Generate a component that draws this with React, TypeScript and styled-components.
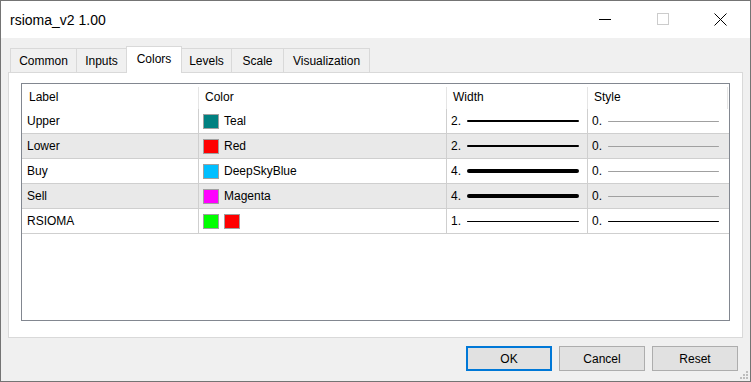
import React from "react"
import styled, { createGlobalStyle } from "styled-components"

const GlobalStyle = createGlobalStyle`
  html, body {
    margin: 0;
    padding: 0;
    background: #ffffff;
  }
  * {
    box-sizing: border-box;
  }
`

interface PlotRow {
  label: string,
  swatches: string[],
  colorName?: string,
  width: number,
  styleColor: string,
}

const rows: PlotRow[] = [
  { label: "Upper", swatches: ["#008080"], colorName: "Teal", width: 2, styleColor: "#a0a0a0" },
  { label: "Lower", swatches: ["#ff0000"], colorName: "Red", width: 2, styleColor: "#a0a0a0" },
  { label: "Buy", swatches: ["#00bfff"], colorName: "DeepSkyBlue", width: 4, styleColor: "#a0a0a0" },
  { label: "Sell", swatches: ["#ff00ff"], colorName: "Magenta", width: 4, styleColor: "#a0a0a0" },
  { label: "RSIOMA", swatches: ["#00ff00", "#ff0000"], width: 1, styleColor: "#000000" },
]

const tabs = [
  { name: "Common", width: 67 },
  { name: "Inputs", width: 50 },
  { name: "Colors", width: 55, active: true },
  { name: "Levels", width: 50 },
  { name: "Scale", width: 52 },
  { name: "Visualization", width: 86 },
]

export default function App() {
  return (
    <>
      <GlobalStyle/>
      <Window>
        <TitleBar>
          <Title>rsioma_v2 1.00</Title>
          <CaptionButtons>
            <CaptionButton>
              <svg width="12" height="12" viewBox="0 0 12 12">
                <line x1="0" y1="6.5" x2="12" y2="6.5" stroke="#000" strokeWidth="1"/>
              </svg>
            </CaptionButton>
            <CaptionButton>
              <svg width="12" height="12" viewBox="0 0 12 12">
                <rect x="0.5" y="0.5" width="11" height="11" fill="none" stroke="#cccccc" strokeWidth="1"/>
              </svg>
            </CaptionButton>
            <CaptionButton>
              <svg width="13" height="13" viewBox="0 0 13 13">
                <path d="M0.5 0.5 L12.5 12.5 M12.5 0.5 L0.5 12.5" stroke="#000" strokeWidth="1"/>
              </svg>
            </CaptionButton>
          </CaptionButtons>
        </TitleBar>

        <DialogBody>
          <TabStrip>
            {tabs.map(t => (
              <Tab key={t.name} $width={t.width} $active={!!t.active}>{t.name}</Tab>
            ))}
          </TabStrip>

          <TabPanel>
            <ListView>
              <HeaderRow>
                <HeaderCell>Label</HeaderCell>
                <HeaderCell $divider>Color</HeaderCell>
                <HeaderCell $divider>Width</HeaderCell>
                <HeaderCell $divider $last>Style</HeaderCell>
              </HeaderRow>
              {rows.map((r, i) => (
                <Row key={r.label} $shaded={i % 2 === 1}>
                  <Cell>{r.label}</Cell>
                  <Cell $divider>
                    {r.swatches.map((c, j) => <Swatch key={j} $color={c}/>)}
                    {r.colorName && <span>{r.colorName}</span>}
                  </Cell>
                  <Cell $divider>
                    <Value>{r.width}.</Value>
                    <Stroke $thickness={r.width} $color="#000000" $length={112}/>
                  </Cell>
                  <Cell $divider>
                    <Value>0.</Value>
                    <Stroke $thickness={1} $color={r.styleColor} $length={111}/>
                  </Cell>
                </Row>
              ))}
            </ListView>
          </TabPanel>

          <ButtonBar>
            <Button $default>OK</Button>
            <Button>Cancel</Button>
            <Button>Reset</Button>
          </ButtonBar>
        </DialogBody>

        <SizeGrip width="11" height="11" viewBox="0 0 11 11">
          <rect x="8" y="2" width="2" height="2" fill="#bdbdbd"/>
          <rect x="5" y="5" width="2" height="2" fill="#bdbdbd"/>
          <rect x="8" y="5" width="2" height="2" fill="#bdbdbd"/>
          <rect x="2" y="8" width="2" height="2" fill="#bdbdbd"/>
          <rect x="5" y="8" width="2" height="2" fill="#bdbdbd"/>
          <rect x="8" y="8" width="2" height="2" fill="#bdbdbd"/>
        </SizeGrip>
      </Window>
    </>
  )
}

const Window = styled.div`
  border: 1px solid #747474;
  display: flex;
  flex-direction: column;
  font-family: "Liberation Sans", Arial, sans-serif;
  font-size: 12px;
  color: #000;
  height: 382px;
  position: relative;
  width: 751px;
`

const TitleBar = styled.div`
  align-items: center;
  background: #ffffff;
  display: flex;
  flex: 0 0 37px;
  justify-content: space-between;
`

const Title = styled.div`
  font-size: 14px;
  padding-left: 9px;
`

const CaptionButtons = styled.div`
  display: flex;
  height: 100%;
`

const CaptionButton = styled.div`
  align-items: center;
  display: flex;
  justify-content: center;
  width: 58px;
  padding: 0 1px 1px 0;
`

const DialogBody = styled.div`
  background: #f0f0f0;
  display: flex;
  flex: 1;
  flex-direction: column;
  padding: 8px 7px 0;
`

const TabStrip = styled.div`
  align-items: flex-end;
  display: flex;
  height: 26px;
  padding-left: 2px;
  position: relative;
  z-index: 1;
`

const Tab = styled.div<{ $width: number, $active: boolean }>`
  align-items: center;
  background: ${({ $active }) => $active ? "#ffffff" : "#f0f0f0"};
  border: 1px solid #d9d9d9;
  border-bottom: none;
  display: flex;
  height: ${({ $active }) => $active ? "27px" : "24px"};
  justify-content: center;
  margin-bottom: ${({ $active }) => $active ? "-1px" : "0"};
  margin-left: -1px;
  padding-bottom: ${({ $active }) => $active ? "3px" : "0"};
  width: ${({ $width }) => $width + 1}px;
  z-index: ${({ $active }) => $active ? 2 : 1};

  &:first-child {
    margin-left: 0;
    width: ${({ $width }) => $width}px;
  }
`

const TabPanel = styled.div`
  background: #ffffff;
  border: 1px solid #d9d9d9;
  height: 266px;
  padding: 10px 12px 16px 12px;
`

const ListView = styled.div`
  background: #ffffff;
  border: 1px solid #828790;
  height: 238px;
`

const columns = "176px 248px 141px 141px"

const HeaderRow = styled.div`
  display: grid;
  grid-template-columns: ${columns};
  height: 25px;
`

const HeaderCell = styled.div<{ $divider?: boolean, $last?: boolean }>`
  align-items: center;
  border-left: ${({ $divider }) => $divider ? "1px solid #e5e5e5" : "none"};
  border-right: ${({ $last }) => $last ? "1px solid #e5e5e5" : "none"};
  display: flex;
  margin-top: 3px;
  padding-left: ${({ $divider }) => $divider ? "6px" : "7px"};
  padding-bottom: 2px;
`

const Row = styled.div<{ $shaded: boolean }>`
  background: ${({ $shaded }) => $shaded ? "#e9e9e9" : "#ffffff"};
  border-bottom: 1px solid #cfcfcf;
  display: grid;
  grid-template-columns: ${columns};
  height: 25px;
`

const Cell = styled.div<{ $divider?: boolean }>`
  align-items: center;
  border-left: ${({ $divider }) => $divider ? "1px solid #cfcfcf" : "none"};
  display: flex;
  gap: 5px;
  padding-left: ${({ $divider }) => $divider ? "4px" : "5px"};
  white-space: nowrap;
`

const Swatch = styled.div<{ $color: string }>`
  background: ${({ $color }) => $color};
  border: 1px solid #a0a0a0;
  height: 15px;
  width: 16px;
`

const Value = styled.span`
  margin-right: 1px;
  width: 10px;
`

const Stroke = styled.div<{ $thickness: number, $color: string, $length: number }>`
  background: ${({ $color }) => $color};
  border-radius: ${({ $thickness }) => $thickness > 2 ? "2px" : "1px"};
  height: ${({ $thickness }) => $thickness}px;
  width: ${({ $length }) => $length}px;
`

const ButtonBar = styled.div`
  display: flex;
  gap: 7px;
  justify-content: flex-end;
  padding: 8px 5px 0 0;
`

const Button = styled.div<{ $default?: boolean }>`
  align-items: center;
  background: #e1e1e1;
  border: ${({ $default }) => $default ? "2px solid #0078d7" : "1px solid #adadad"};
  display: flex;
  height: 25px;
  justify-content: center;
  width: 86px;
`

const SizeGrip = styled.svg`
  bottom: 1px;
  position: absolute;
  right: 1px;
`
